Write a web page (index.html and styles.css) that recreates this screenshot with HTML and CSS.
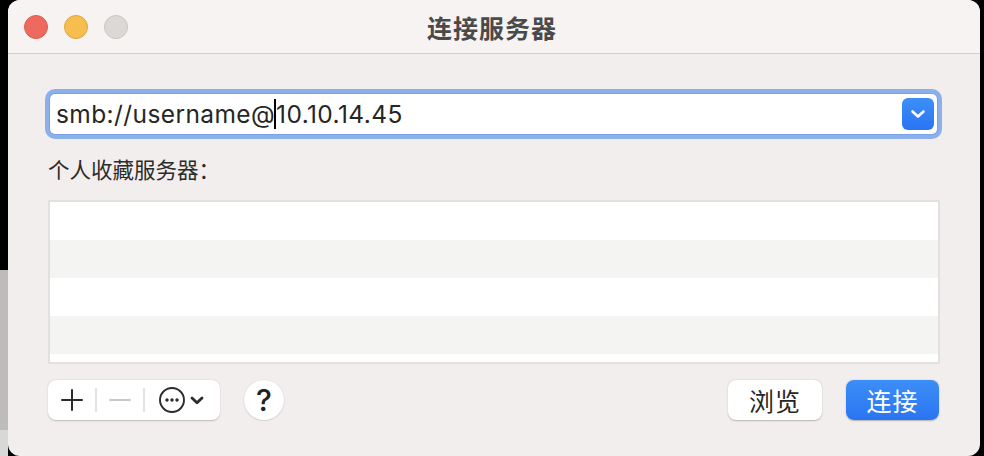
FILE: index.html
```html
<!DOCTYPE html>
<html lang="zh-CN">
<head>
<meta charset="utf-8">
<title>连接服务器</title>
<link rel="stylesheet" href="styles.css">
</head>
<body>
<div class="window">
  <div class="titlebar">
    <div class="lights">
      <span class="light red"></span>
      <span class="light yellow"></span>
      <span class="light gray"></span>
    </div>
    <div class="title">连接服务器</div>
    <div></div>
  </div>
  <div class="content">
    <div class="field">
      <div class="field-text"><span>smb://username@</span><span class="caret"></span><span>10.10.14.45</span></div>
      <div class="drop">
        <svg width="14" height="8" viewBox="0 0 14 8"><path d="M1.5 1.5 L7 6.5 L12.5 1.5" fill="none" stroke="#fff" stroke-width="2.6" stroke-linecap="round" stroke-linejoin="round"/></svg>
      </div>
    </div>
    <div class="label">个人收藏服务器：</div>
    <div class="list">
      <div class="row"></div>
      <div class="row alt"></div>
      <div class="row"></div>
      <div class="row alt"></div>
      <div class="row last"></div>
    </div>
    <div class="bottom">
      <div class="seg">
        <div class="seg-item plus">
          <svg width="22" height="22" viewBox="0 0 22 22"><path d="M11 1 V21 M1 11 H21" stroke="#2b2b2b" stroke-width="2" stroke-linecap="round"/></svg>
        </div>
        <div class="seg-sep"></div>
        <div class="seg-item minus">
          <svg width="22" height="22" viewBox="0 0 22 22"><path d="M1 11 H21" stroke="#c9c8c8" stroke-width="2" stroke-linecap="round"/></svg>
        </div>
        <div class="seg-sep"></div>
        <div class="seg-item more">
          <svg width="28" height="28" viewBox="0 0 28 28"><circle cx="14" cy="14" r="12" fill="none" stroke="#2b2b2b" stroke-width="1.9"/><circle cx="9" cy="14" r="1.7" fill="#2b2b2b"/><circle cx="14" cy="14" r="1.7" fill="#2b2b2b"/><circle cx="19" cy="14" r="1.7" fill="#2b2b2b"/></svg>
          <svg class="chev" width="14" height="9" viewBox="0 0 14 9"><path d="M2 2 L7 6.8 L12 2" fill="none" stroke="#2b2b2b" stroke-width="2.8" stroke-linecap="round" stroke-linejoin="round"/></svg>
        </div>
      </div>
      <div class="help">?</div>
      <div class="spacer"></div>
      <div class="btn">浏览</div>
      <div class="btn primary">连接</div>
    </div>
  </div>
</div>
</body>
</html>
```

FILE: styles.css
```css
html, body {
  margin: 0;
  padding: 0;
}
body {
  width: 984px;
  height: 456px;
  overflow: hidden;
  background:
    linear-gradient(to bottom, #000 0, #000 270px, #bdbbbb 270px, #bdbbbb 430px, #d9d8d8 430px) 0 0 / 8px 456px no-repeat,
    #000;
  font-family: "Inter", "Noto Sans CJK SC", sans-serif;
}
.window {
  margin-left: 8px;
  width: 972px;
  height: 456px;
  background: #f2eeed;
  border-radius: 12px;
  overflow: hidden;
  display: flex;
  flex-direction: column;
}
.titlebar {
  height: 53px;
  flex: none;
  background: #f6f3f2;
  border-bottom: 1px solid #d3cfce;
  display: grid;
  grid-template-columns: 1fr auto 1fr;
  align-items: center;
}
.lights {
  display: flex;
  gap: 16px;
  padding-left: 16px;
}
.light {
  width: 24px;
  height: 24px;
  border-radius: 50%;
  box-sizing: border-box;
}
.red { background: #ee6a5e; border: 1px solid #dc5b50; }
.yellow { background: #f6be4f; border: 1px solid #dea73c; }
.gray { background: #dcd8d6; border: 1px solid #c9c5c3; }
.title {
  font-family: "Noto Sans CJK SC", sans-serif;
  font-size: 25px;
  font-weight: 700;
  color: #4a4a4a;
  letter-spacing: 1px;
  padding-right: 4px;
  line-height: 30px;
}
.content {
  padding: 40px 40px 0 40px;
  display: flex;
  flex-direction: column;
}
.field {
  margin: 0 3px 0 2px;
  height: 40px;
  background: #fff;
  border-radius: 5px;
  box-shadow: 0 0 0 1px #7aa1e4, 0 0 0 5px #8cb0ec;
  display: flex;
  align-items: center;
  padding-left: 6px;
  padding-right: 3px;
}
.field-text {
  flex: 1;
  font-size: 24.5px;
  letter-spacing: 0.4px;
  color: #262626;
  display: flex;
  align-items: center;
  white-space: pre;
  line-height: 30px;
}
.caret {
  width: 2px;
  height: 30px;
  background: #000;
  margin: 0 0 0 -1px;
}
.drop {
  width: 32px;
  height: 32px;
  border-radius: 6px;
  background: linear-gradient(to bottom, #3d8ff7, #2a74f3);
  display: flex;
  align-items: center;
  justify-content: center;
}
.label {
  margin-top: 23px;
  height: 24px;
  line-height: 24px;
  font-family: "Noto Sans CJK SC", sans-serif;
  font-size: 21.5px;
  color: #2b2b2b;
  margin-bottom: 19px;
}
.list {
  border: 2px solid #e3e1e0;
  background: #fff;
  height: 160px;
}
.row { height: 38px; background: #fff; }
.row.alt { background: #f4f4f3; }
.row.last { height: 8px; }
.bottom {
  margin-top: 16px;
  height: 40px;
  display: flex;
  align-items: center;
}
.seg {
  width: 172px;
  height: 40px;
  background: #fff;
  border-radius: 8px;
  box-shadow: 0 0.5px 1.5px rgba(0,0,0,0.22);
  display: flex;
  align-items: center;
  box-sizing: border-box;
}
.seg-item {
  display: flex;
  align-items: center;
  justify-content: center;
}
.plus { width: 48px; }
.minus { width: 48px; }
.more { flex: 1; gap: 4px; padding-right: 2px; }
.seg-sep {
  width: 2px;
  height: 24px;
  background: #e4e3e3;
  margin-left: -1px;
  margin-right: -1px;
}
.help {
  margin-left: 24px;
  width: 40px;
  height: 40px;
  border-radius: 50%;
  background: #fff;
  box-shadow: 0 0.5px 1.5px rgba(0,0,0,0.22);
  display: flex;
  align-items: center;
  justify-content: center;
  font-family: "Inter", sans-serif;
  font-size: 30px;
  font-weight: 500;
  color: #222;
  line-height: 40px;
}
.spacer { flex: 1; }
.btn {
  width: 94px;
  height: 40px;
  border-radius: 8px;
  background: #fff;
  box-shadow: 0 0.5px 1.5px rgba(0,0,0,0.25);
  display: flex;
  align-items: center;
  justify-content: center;
  font-family: "Noto Sans CJK SC", sans-serif;
  font-size: 25px;
  color: #262626;
  letter-spacing: 1px;
}
.btn.primary {
  margin-left: 24px;
  width: 93px;
  background: linear-gradient(to bottom, #3c8ef7, #2a75f3);
  color: #fff;
  margin-right: 1px;
}
```
